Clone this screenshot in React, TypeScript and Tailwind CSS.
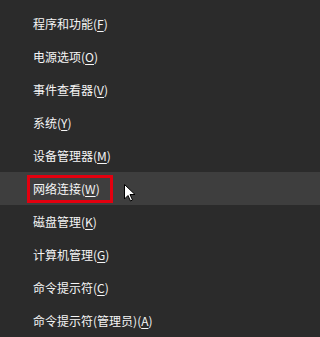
const items: { label: string; key: string; active?: boolean }[] = [
  { label: "程序和功能", key: "F" },
  { label: "电源选项", key: "O" },
  { label: "事件查看器", key: "V" },
  { label: "系统", key: "Y" },
  { label: "设备管理器", key: "M" },
  { label: "网络连接", key: "W", active: true },
  { label: "磁盘管理", key: "K" },
  { label: "计算机管理", key: "G" },
  { label: "命令提示符", key: "C" },
  { label: "命令提示符(管理员)", key: "A" },
];

function Cursor() {
  return (
    <svg
      className="absolute left-[124px] top-[12px]"
      width="12"
      height="18"
      viewBox="0 0 12 18"
    >
      <path
        d="M0.5 0.5 L0.5 15 L4 11.5 L6.5 17 L8.5 16 L6 10.5 L11 10.5 Z"
        fill="#fff"
        stroke="#000"
        strokeWidth="1"
        strokeLinejoin="miter"
      />
    </svg>
  );
}

export default function App() {
  return (
    <main
      className="w-full min-w-[227px] h-[337px] bg-[#2b2b2b] pt-[7px] overflow-hidden text-[#f5f5f5] text-[12px]"
      style={{ fontFamily: '"Noto Sans CJK SC", "Noto Sans", sans-serif' }}
    >
      {items.map((item) => (
        <div
          key={item.label}
          className={
            item.active
              ? "relative h-[33px] flex items-center pl-[27px] bg-[#3e3e3e]"
              : "relative h-[33px] flex items-center pl-[33px]"
          }
        >
          {item.active ? (
            <span className="h-[28px] flex items-center border-[3px] border-[#e3000f] pl-[3px] pr-[10px]">
              {item.label}(<span className="underline underline-offset-2">{item.key}</span>)
            </span>
          ) : (
            <span>
              {item.label}(<span className="underline underline-offset-2">{item.key}</span>)
            </span>
          )}
          {item.active && <Cursor />}
        </div>
      ))}
    </main>
  );
}
